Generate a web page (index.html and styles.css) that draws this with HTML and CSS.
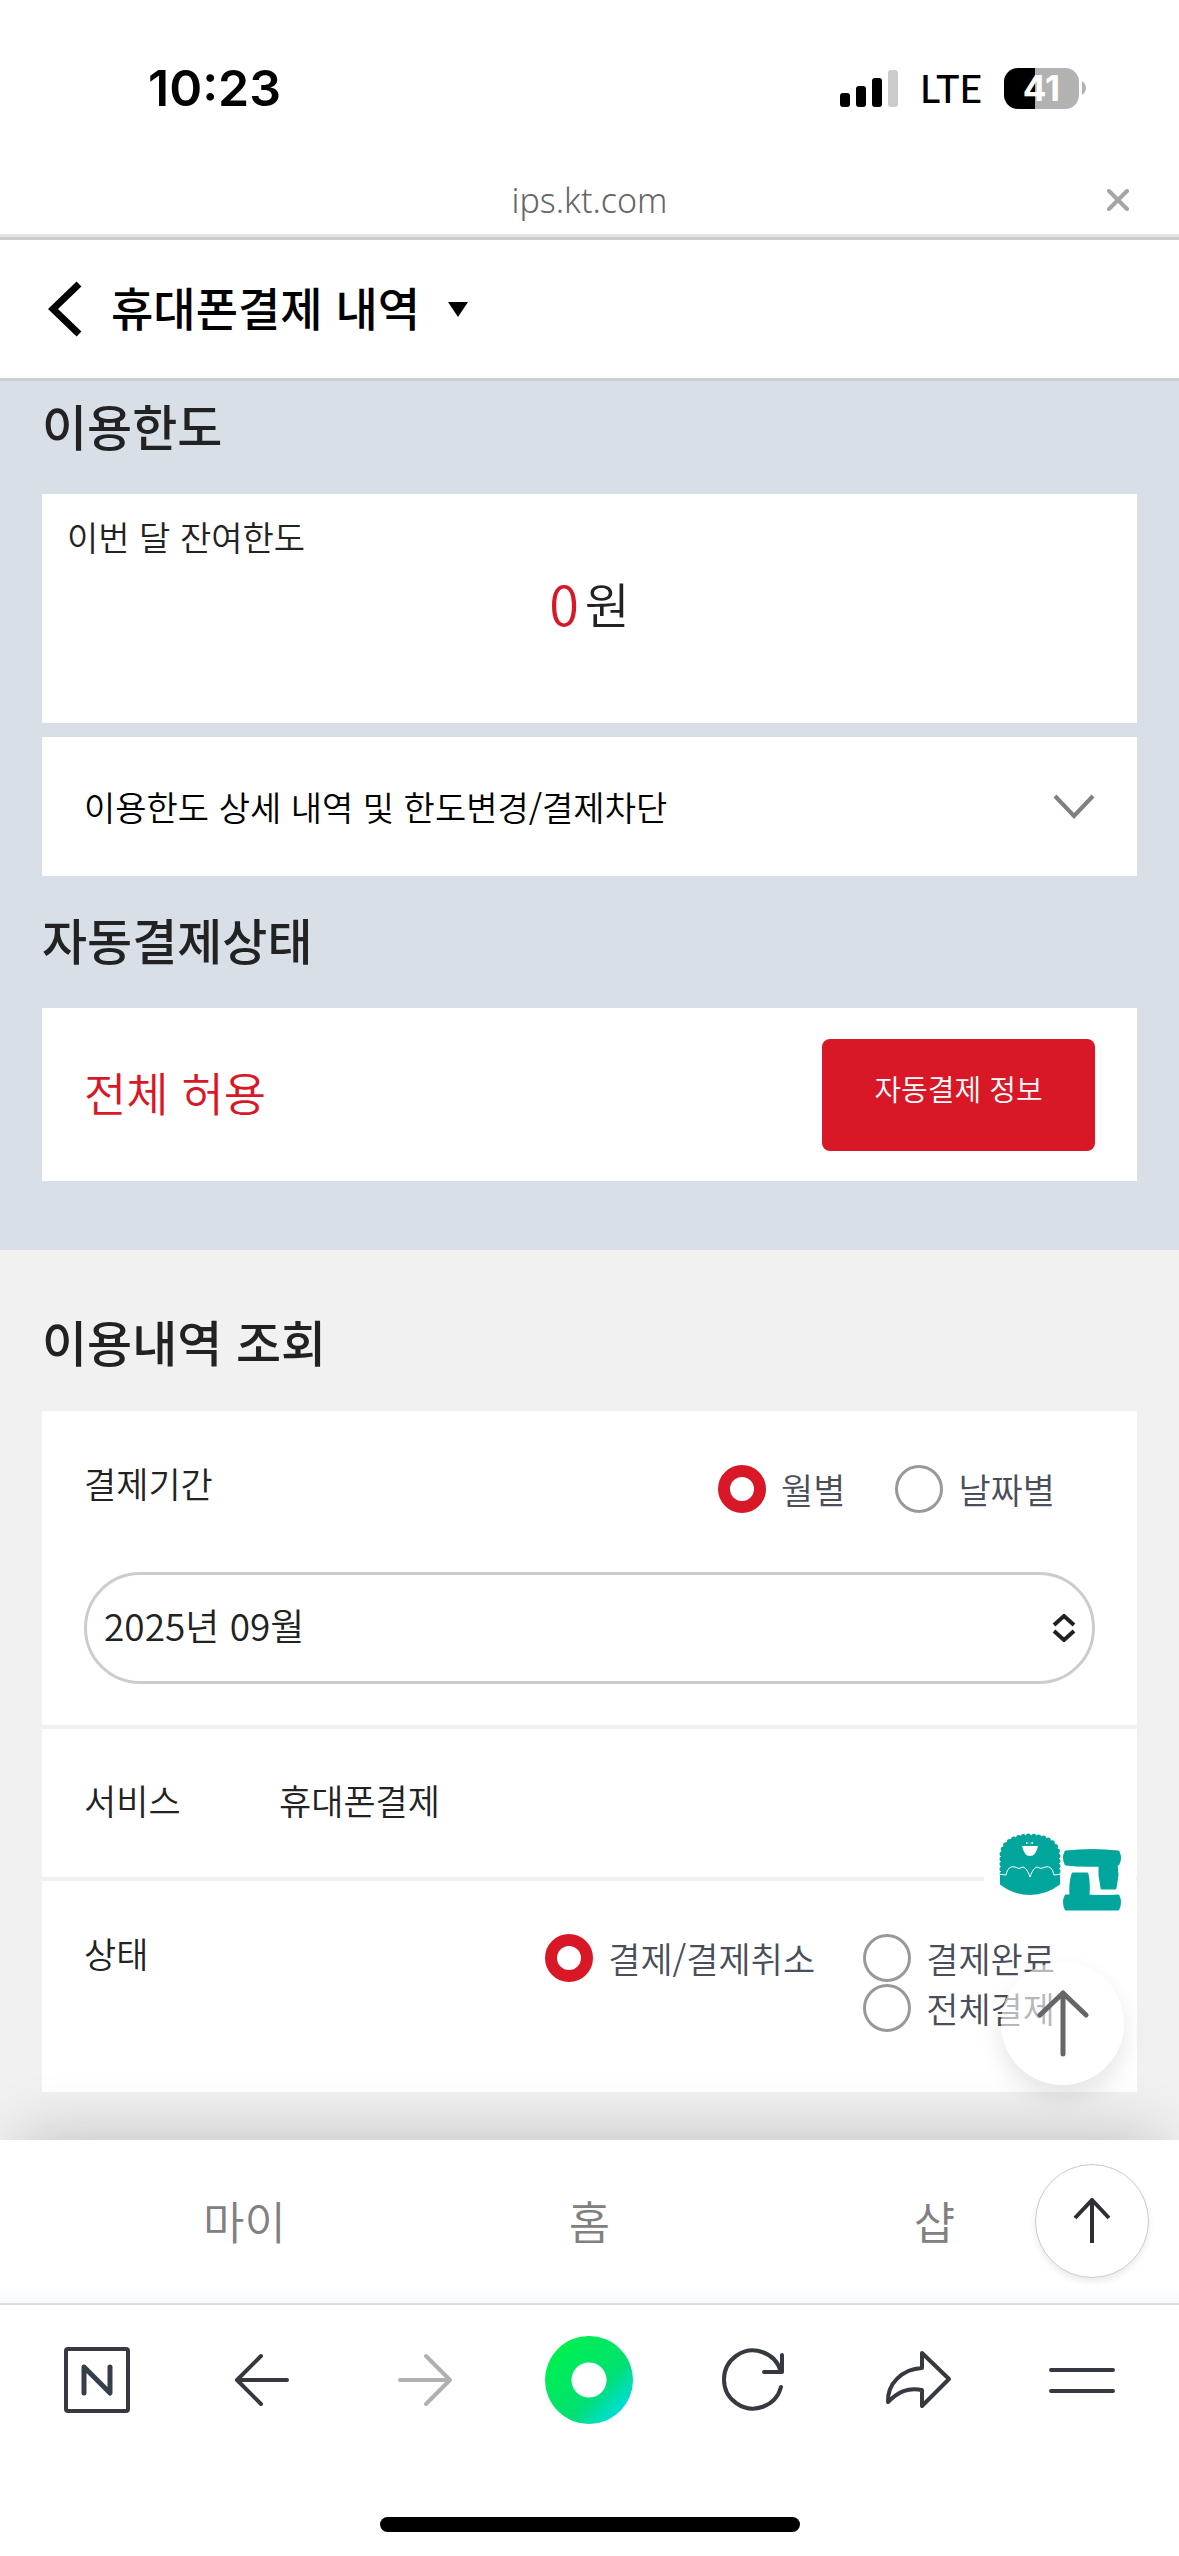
FILE: index.html
```html
<!DOCTYPE html>
<html lang="ko">
<head>
<meta charset="utf-8">
<meta name="viewport" content="width=device-width, initial-scale=1">
<title>휴대폰결제 내역</title>
<link rel="stylesheet" href="styles.css">
</head>
<body>
<div class="screen">
  <div class="status">
    <span class="clock">10:23</span>
    <div class="status-icons">
      <svg class="signal" viewBox="0 0 58 38" aria-hidden="true">
        <rect x="0" y="24" width="10" height="14" rx="3"/>
        <rect x="16" y="17" width="10" height="21" rx="3"/>
        <rect x="32" y="9" width="10" height="29" rx="3"/>
        <rect x="48" y="1" width="10" height="37" rx="3" fill="#ccc"/>
      </svg>
      <span class="network">LTE</span>
      <div class="battery"><span class="battery-level">41</span><svg class="battery-tip" viewBox="0 0 4 14" aria-hidden="true"><path d="M0 0Q4 3 4 7T0 14Z" fill="#b2b2b2"/></svg></div>
    </div>
  </div>

  <div class="address">
    <span class="address-text">ips.kt.com</span>
    <button class="icon-button close" type="button" aria-label="닫기">
      <svg viewBox="0 0 22 22"><path d="M2 2L20 20M20 2L2 20" stroke="#a5a5a5" stroke-width="4" stroke-linecap="round"/></svg>
    </button>
  </div>

  <header class="page-header">
    <button class="icon-button back" type="button" aria-label="뒤로">
      <svg viewBox="0 0 34 56"><path d="M31 3L5 28L31 53" fill="none" stroke="#000" stroke-width="7"/></svg>
    </button>
    <button class="title-button" type="button">
      <span class="page-title">휴대폰결제 내역</span>
      <svg class="caret" viewBox="0 0 20 15" aria-hidden="true"><path d="M0 0H20L10 15Z"/></svg>
    </button>
  </header>

  <main>
    <section class="panel limits">
      <h2 class="heading">이용한도</h2>
      <div class="card balance">
        <p class="balance-label">이번 달 잔여한도</p>
        <p class="balance-value"><span class="amount">0</span><span>원</span></p>
      </div>
      <button class="card details" type="button">
        <span>이용한도 상세 내역 및 한도변경/결제차단</span>
        <svg class="chevron" viewBox="0 0 42 26" aria-hidden="true"><path d="M2 2L21 22L40 2" fill="none" stroke="#808080" stroke-width="4"/></svg>
      </button>
      <h2 class="heading auto-heading">자동결제상태</h2>
      <div class="card auto">
        <span class="auto-state">전체 허용</span>
        <button class="auto-button" type="button">자동결제 정보</button>
      </div>
    </section>

    <section class="panel history">
      <h2 class="heading">이용내역 조회</h2>
      <form class="card search">
        <div class="row period">
          <div class="row-top">
            <label for="month">결제기간</label>
            <div class="options period-options">
              <label class="option"><input type="radio" name="period" checked>월별</label>
              <label class="option"><input type="radio" name="period">날짜별</label>
            </div>
          </div>
          <div class="select-wrap">
            <select id="month" class="month"><option>2025년 09월</option></select>
            <svg class="select-arrows" viewBox="0 0 24 28" aria-hidden="true"><path d="M2 11L12 2L22 11M2 17L12 26L22 17" fill="none" stroke="#222" stroke-width="4"/></svg>
          </div>
        </div>
        <div class="row service">
          <span class="row-name">서비스</span>
          <span>휴대폰결제</span>
        </div>
        <div class="row state">
          <span class="row-name">상태</span>
          <div class="options state-options">
            <label class="option"><input type="radio" name="state" checked>결제/결제취소</label>
            <div class="option-column">
              <label class="option"><input type="radio" name="state">결제완료</label>
              <label class="option"><input type="radio" name="state">전체결제</label>
            </div>
          </div>
        </div>
      </form>
    </section>
  </main>

  <div class="dock">
    <a class="floating-logo" href="#" aria-label="용고">
      <svg viewBox="0 0 152 94">
        <rect width="152" height="94" fill="#fff"/>
        <g fill="#00a69c" stroke="#00a69c" stroke-linejoin="round">
          <path d="M17 42H75V52Q62 62 46 62T17 52Z" stroke-width="2"/>
          <path d="M18 42V22Q20 5 46 4Q72 5 74 22V42Z" stroke-width="2"/>
          <path d="M18 42V22Q20 5 46 4Q72 5 74 22V42" fill="none" stroke-width="5" stroke-dasharray="0 5" stroke-linecap="round"/>
          <path d="M82 20Q108 17 134 20Q137 26 134 32H132L133 43L131 56H118L116 43V33Q98 34 82 32Q79 26 82 20Z" stroke-width="3"/>
          <path d="M89 42H103Q105 52 104 64Q120 65 134 64Q137 70 134 77H82Q79 70 82 64H87Q86 52 89 42Z" stroke-width="3"/>
        </g>
        <path d="M14 42L22 43Q24 33 31 35Q35 38 39 35Q43 36 46 45Q49 36 53 35Q57 38 61 35Q68 33 70 43L78 42" fill="none" stroke="#fff" stroke-width="1"/>
        <path d="M38 14H54Q52 24 46 24T38 14Z" fill="#fff"/>
        <path d="M42 10L45 11L42 12ZM49 10L46 11L49 12Z" fill="#fff"/>
      </svg>
    </a>
    <button class="page-top" type="button" aria-label="맨 위로">
      <svg viewBox="0 0 52 67"><path d="M26 64V3M3 25L26 3L49 25" fill="none" stroke="#666" stroke-width="5" stroke-linecap="round" stroke-linejoin="round"/></svg>
    </button>

    <nav class="tabs">
      <a href="#">마이</a>
      <a href="#">홈</a>
      <a href="#">샵</a>
      <button class="scroll-top" type="button" aria-label="위로">
        <svg viewBox="0 0 38 46"><path d="M19 45V2M2 20L19 2L36 20" fill="none" stroke="#2c2f38" stroke-width="4"/></svg>
      </button>
    </nav>

    <nav class="toolbar">
      <button class="icon-button" type="button" aria-label="네이버 홈"><svg viewBox="0 0 68 68"><rect x="3" y="3" width="62" height="62" rx="2" fill="none" stroke="#36393f" stroke-width="4"/><path d="M21 47V21L47 47V21" fill="none" stroke="#363f49" stroke-width="5" stroke-linecap="round" stroke-linejoin="round"/></svg></button>
      <button class="icon-button" type="button" aria-label="이전"><svg viewBox="0 0 68 68"><path d="M60 34H10M34 10L10 34L34 58" fill="none" stroke="#36393f" stroke-width="4" stroke-linecap="round" stroke-linejoin="round"/></svg></button>
      <button class="icon-button" type="button" aria-label="다음"><svg viewBox="0 0 68 68"><path d="M9 34H59M35 10L59 34L35 58" fill="none" stroke="#b0b0b1" stroke-width="4" stroke-linecap="round" stroke-linejoin="round"/></svg></button>
      <button class="green-dot" type="button" aria-label="그린닷"></button>
      <button class="icon-button" type="button" aria-label="새로고침"><svg viewBox="0 0 68 68"><path d="M61 41A29 29 0 1 1 61 26M62 9V26H44" fill="none" stroke="#36393f" stroke-width="4" stroke-linecap="round" stroke-linejoin="round"/></svg></button>
      <button class="icon-button" type="button" aria-label="공유"><svg viewBox="0 0 68 68"><path d="M38 7L65 33L38 60V44C24 41 14 46 4 56C3 38 18 23 38 22Z" fill="none" stroke="#36393f" stroke-width="4" stroke-linejoin="round"/></svg></button>
      <button class="icon-button" type="button" aria-label="메뉴"><svg viewBox="0 0 68 68"><path d="M3 24H65M3 45H65" stroke="#36393f" stroke-width="4" stroke-linecap="round"/></svg></button>
    </nav>
    <div class="home-indicator"></div>
  </div>
</div>
</body>
</html>
```
FILE: styles.css
```css
* { box-sizing: border-box; }

body {
  margin: 0;
  background: #f1f1f1;
  color: #222;
  font-family: "Noto Sans CJK KR", sans-serif;
  font-size: 35px;
  font-weight: 350;
  line-height: 48px;
}

h2, p { margin: 0; }

button, select, input {
  margin: 0;
  padding: 0;
  border: 0;
  background: none;
  color: inherit;
  font: inherit;
}

svg { display: block; }

.screen {
  display: flex;
  flex-direction: column;
  min-height: 100vh;
}

/* Phone status bar */
.status {
  display: flex;
  align-items: center;
  justify-content: space-between;
  height: 176px;
  padding: 0 93px 0 148px;
  background: #fff;
  color: #000;
  font-family: Inter, sans-serif;
}
.clock { font-size: 50px; font-weight: 600; }
.status-icons { display: flex; align-items: center; gap: 22px; }
.signal { width: 58px; height: 38px; }
.network { font-family: Lato, sans-serif; font-size: 39px; font-weight: 500; }
.battery { display: flex; align-items: center; gap: 3px; }
.battery-level {
  width: 75px;
  height: 41px;
  border-radius: 14px;
  background: linear-gradient(90deg, #000 41%, #b2b2b2 41%);
  color: #fff;
  font-size: 35px;
  font-weight: 700;
  line-height: 41px;
  text-align: center;
}
.battery-tip { width: 4px; height: 14px; }

/* Address strip */
.address {
  display: grid;
  grid-template-columns: 1fr auto 1fr;
  align-items: center;
  height: 64px;
  padding: 0 50px 14px;
  border-bottom: 3px solid #ccc;
  background: #fff;
  box-shadow: inset 0 -3px #e3e3e3;
}
.address-text {
  grid-column: 2;
  color: #666;
  font-family: "Noto Sans", sans-serif;
  font-size: 34px;
  font-weight: 300;
}
.icon-button svg { width: 68px; height: 68px; }
.close { justify-self: end; }
.close svg { width: 22px; height: 22px; }

/* Page header */
.page-header {
  display: flex;
  align-items: center;
  gap: 29px;
  height: 141px;
  padding: 0 48px;
  border-bottom: 3px solid #cccecd;
  background: #fff;
  color: #000;
}
.back svg { width: 34px; height: 56px; }
.title-button { display: flex; align-items: center; gap: 28px; }
.page-title { padding-bottom: 6px; font-size: 46px; font-weight: 500; }
.caret { width: 20px; height: 15px; }

/* Content */
.panel { padding: 0 42px; }
.limits { padding-bottom: 69px; background: #d8dfe7; }
.history { padding-top: 45px; }
.heading {
  padding: 12px 0 36px;
  font-size: 49px;
  font-weight: 500;
  line-height: 64px;
}
.auto-heading { padding: 31px 0 37px; }
.history .heading { padding: 14px 0 38px; }
.card { background: #fff; }

.balance { height: 229px; padding: 19px 25px; margin: 1px 0 14px; }
.balance-label { font-size: 34px; }
.balance-value {
  display: flex;
  align-items: center;
  justify-content: center;
  gap: 6px;
  padding-top: 12px;
  font-size: 49px;
  line-height: 60px;
}
.amount { color: #d91827; font-size: 54px; }

.details {
  display: flex;
  align-items: center;
  justify-content: space-between;
  width: 100%;
  height: 139px;
  padding: 0 42px;
  color: #000;
  font-size: 34px;
}
.chevron { width: 42px; height: 26px; }

.auto {
  display: flex;
  align-items: center;
  justify-content: space-between;
  height: 173px;
  padding: 0 42px;
}
.auto-state { padding-bottom: 8px; color: #d91827; font-size: 46px; }
.auto-button {
  width: 273px;
  height: 112px;
  padding-bottom: 14px;
  border-radius: 8px;
  background: #d91827;
  color: #fff;
  font-size: 29px;
}

.row { padding: 0 42px; }
.row + .row { border-top: 4px solid #f1f1f1; }
.period { padding-top: 48px; padding-bottom: 41px; }
.row-top { display: flex; justify-content: space-between; }
.options { display: flex; color: #4a4e5a; }
.period-options { gap: 50px; padding: 6px 40px 0 0; }
.state-options { gap: 48px; padding: 4px 40px 0 0; }
.option { display: flex; align-items: center; gap: 15px; }
.state-options .option { height: 50px; }
.option input {
  appearance: none;
  width: 48px;
  height: 48px;
  border: 3px solid #999;
  border-radius: 50%;
}
.option input:checked { border: 12px solid #d91827; }

.select-wrap {
  display: grid;
  align-items: center;
  margin-top: 59px;
}
.month, .select-arrows { grid-area: 1 / 1; }
.month {
  appearance: none;
  width: 100%;
  height: 112px;
  padding: 0 17px 6px;
  border: 3px solid #ccc;
  border-radius: 56px;
  font-size: 37px;
}
.select-arrows { justify-self: end; width: 24px; height: 28px; margin-right: 19px; pointer-events: none; }

.service { display: flex; align-items: center; height: 152px; padding-bottom: 6px; }
.row-name { width: 195px; }
.state { display: flex; justify-content: space-between; padding-top: 48px; padding-bottom: 59px; }

/* Bottom bars, with the two floating items above them */
.dock {
  position: relative;
  flex: 1;
  margin-top: 48px;
  background: #fff;
  box-shadow: 0 -24px 60px -20px rgba(0, 0, 0, 0.2);
}
.floating-logo { position: absolute; top: -308px; right: 43px; }
.floating-logo svg { width: 152px; height: 94px; }
.page-top {
  position: absolute;
  top: -178px;
  right: 55px;
  display: flex;
  align-items: center;
  justify-content: center;
  width: 123px;
  height: 123px;
  border-radius: 50%;
  background: rgba(255, 255, 255, 0.6);
  box-shadow: 0 12px 24px rgba(0, 0, 0, 0.1);
}
.page-top svg { width: 52px; height: 67px; }

.tabs {
  position: relative;
  display: grid;
  grid-template-columns: repeat(3, 1fr);
  align-items: center;
  height: 165px;
  padding: 0 72px 2px;
  border-bottom: 2px solid #ddd;
  background: linear-gradient(#fff 90%, #f6f8fb);
  text-align: center;
}
.tabs a { color: #808080; font-size: 45px; text-decoration: none; }
.scroll-top {
  position: absolute;
  top: 24px;
  right: 30px;
  display: flex;
  align-items: center;
  justify-content: center;
  width: 114px;
  height: 114px;
  border: 1px solid #ccc;
  border-radius: 50%;
  background: #fff;
  box-shadow: 0 4px 6px rgba(0, 0, 0, 0.08);
}
.scroll-top svg { width: 38px; height: 46px; }

.toolbar {
  display: grid;
  grid-template-columns: repeat(7, 1fr);
  align-items: center;
  justify-items: center;
  height: 150px;
  padding: 0 15px;
}
.green-dot {
  width: 88px;
  height: 88px;
  border-radius: 50%;
  background:
    radial-gradient(circle, #fff 17px, transparent 18px),
    linear-gradient(135deg, #00f050 15%, #00e070 60%, #00dcea 90%);
}
.home-indicator {
  width: 420px;
  height: 15px;
  margin: 62px auto 0;
  border-radius: 8px;
  background: #000;
}
```
